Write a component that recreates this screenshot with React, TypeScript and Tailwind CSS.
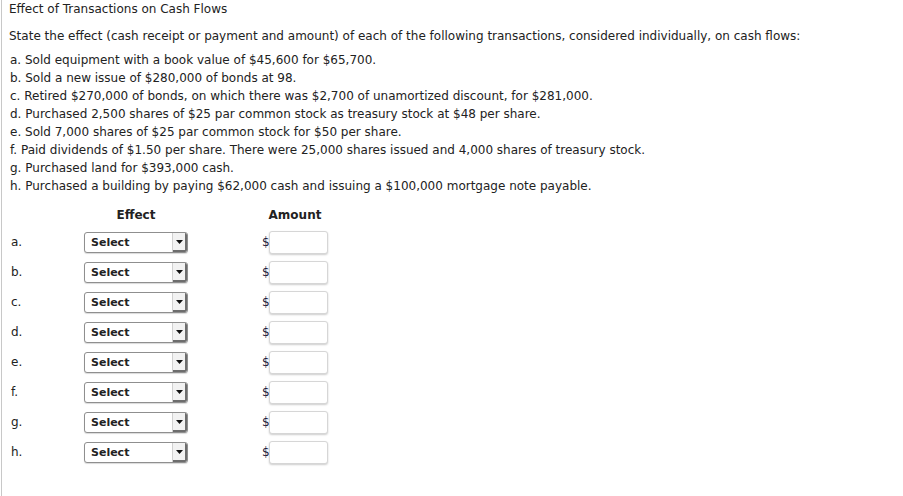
import React from 'react';

const items = [
  'a. Sold equipment with a book value of $45,600 for $65,700.',
  'b. Sold a new issue of $280,000 of bonds at 98.',
  'c. Retired $270,000 of bonds, on which there was $2,700 of unamortized discount, for $281,000.',
  'd. Purchased 2,500 shares of $25 par common stock as treasury stock at $48 per share.',
  'e. Sold 7,000 shares of $25 par common stock for $50 per share.',
  'f. Paid dividends of $1.50 per share. There were 25,000 shares issued and 4,000 shares of treasury stock.',
  'g. Purchased land for $393,000 cash.',
  'h. Purchased a building by paying $62,000 cash and issuing a $100,000 mortgage note payable.',
];

const rows = ['a.', 'b.', 'c.', 'd.', 'e.', 'f.', 'g.', 'h.'];

const SelectBox = () => (
  <div className="flex h-[21px] w-[104px] items-stretch overflow-hidden rounded-[3px] border border-[#8f8f8f] bg-white shadow-[0_1px_1px_rgba(0,0,0,0.15)]">
    <span className="flex-1 pl-[6px] text-[11px] font-bold leading-[19px] text-[#222]">Select</span>
    <span className="flex w-[15px] items-center justify-center border-l border-[#d0d0d0] bg-[#f2f2f2] shadow-[inset_-2px_-2px_0_#6d6d6d]">
      <svg width="7" height="4" viewBox="0 0 7 4" className="-mt-px -ml-px">
        <path d="M0 0h7L3.5 4z" fill="#111" />
      </svg>
    </span>
  </div>
);

const App = () => {
  return (
    <div className="min-h-[496px] bg-white font-['DejaVu_Sans',Verdana,sans-serif] text-[#222]">
      <div className="ml-px min-h-[496px] border-l border-[#c8c8c8] pl-[7px] text-[12px]">
        {/* Header */}
        <div className="pt-px leading-[16px]">Effect of Transactions on Cash Flows</div>
        <p className="mt-[11px] leading-[16px]">
          State the effect (cash receipt or payment and amount) of each of the following transactions, considered individually, on cash flows:
        </p>

        {/* Transactions */}
        <div className="mt-[7px] pl-px">
          {items.map((t) => (
            <div key={t} className="leading-[18px]">{t}</div>
          ))}
        </div>

        {/* Answer table */}
        <div className="mt-[11px] grid grid-cols-[75px_104px_74px_66px] items-center">
          <div />
          <div className="text-center font-bold leading-[18px]">Effect</div>
          <div />
          <div className="text-center font-bold leading-[18px]">Amount</div>
        </div>
        <div className="mt-[3px]">
          {rows.map((r) => (
            <div key={r} className="grid h-[30px] grid-cols-[75px_104px_74px_66px] items-center">
              <div className="pl-[2px]">{r}</div>
              <SelectBox />
              <div />
              <div className="flex items-center">
                <span className="w-[7px] text-[12px] text-[#1a1a3a]">$</span>
                <div className="h-[23px] w-[59px] rounded-[3px] border border-[#d6d6d6] bg-white shadow-[0_1px_2px_rgba(0,0,0,0.2)]" />
              </div>
            </div>
          ))}
        </div>
      </div>
    </div>
  );
};

export default App;
